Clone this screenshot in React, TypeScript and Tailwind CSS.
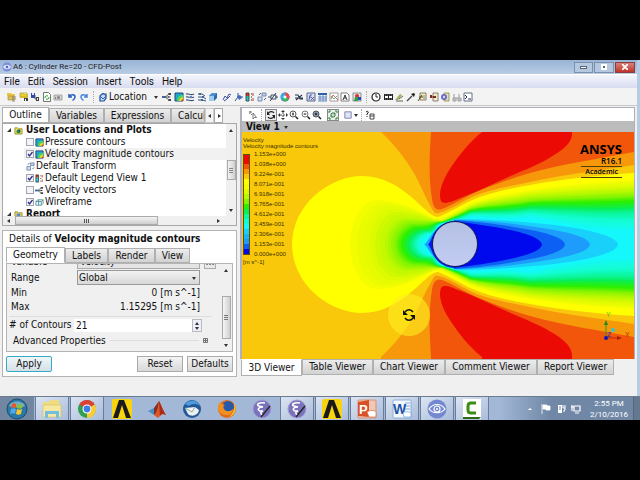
import { useState, type ReactNode } from "react";
import clsx from "clsx";

const UI_FONT = "font-['DejaVu_Sans_Condensed','DejaVu_Sans',sans-serif]";
const SHELL_FONT = "font-['Roboto','Noto_Sans',sans-serif]";

/* ---------- small toolbar icons, all on a 10x10 grid ---------- */

function Icon({ children, className = "size-[10px]" }: { children: ReactNode; className?: string }) {
  return (
    <svg viewBox="0 0 10 10" className={clsx("shrink-0", className)} fill="none" aria-hidden="true">
      {children}
    </svg>
  );
}

const icons: Record<string, ReactNode> = {
  loadResults: (
    <>
      <path d="M0 1h4l1 1h3v2H0z" fill="#e8c840" />
      <path d="M1 4h6v4H1z" fill="#dcc060" stroke="#a08830" strokeWidth=".6" />
      <path d="M5 5h4M5 7h4M5 9h3" stroke="#7a6c48" strokeWidth=".8" />
    </>
  ),
  loadState: (
    <>
      <path d="M1 1h4l1 1h3v4H1z" fill="#e8d030" />
      <path d="M1 1h7v4H1z" stroke="#b09a40" strokeWidth=".7" />
      <path d="M5 6h4v3H5z" fill="#444" />
      <path d="M6 7h1v2H6z" fill="#fff" />
    </>
  ),
  saveState: (
    <>
      <path d="M1 1h4v5H1z" fill="#2f49b8" />
      <path d="M2 1h2v2H2z" fill="#dfe6ff" />
      <path d="M6 5h3v4H6z" fill="#444" />
      <path d="M5 3v4h2" stroke="#555" />
      <path d="M7 6h1v2H7z" fill="#ddd" />
    </>
  ),
  refresh: (
    <>
      <path d="M1.500 .5h5l2 2v7h-7z" fill="#fff" stroke="#777" />
      <path d="M3 6a2 2 0 0 1 3-2M7 5a2 2 0 0 1-3 2" stroke="#20a030" />
    </>
  ),
  camera: (
    <>
      <path d="M1 3h8v5H1z" fill="#d0d0d0" stroke="#9a9a9a" strokeWidth=".8" />
      <circle cx="5.500" cy="5.500" r="1.500" fill="#888" />
      <path d="M2 5h1v2H2z" fill="#888" />
    </>
  ),
  undo: <path d="M2 2v3h3M2.500 4.500C4 2 8 2 8 5c0 1.500-1 2.500-2.500 3.500" stroke="#2a5fc0" strokeWidth="1.500" />,
  redo: <path d="M8 2v3H5M7.500 4.500C6 2 2 2 2 5c0 1.500 1 2.500 2.500 3.500" stroke="#4a86d8" strokeWidth="1.500" />,
  location: (
    <>
      <path d="M2 4l2-2h4v4L6 9H2z" fill="#c6dcf8" stroke="#1c4a9a" strokeWidth="1.200" />
      <path d="M5 1l3 3-3 3-3-3z" fill="none" stroke="#2c62b8" />
    </>
  ),
  vector: (
    <>
      <path d="M1 5h5M3 5l4-3M3 5l4 3" stroke="#444" strokeWidth=".8" />
      <path d="M6 1h3v2H7zM6 9h3V7H7z" fill="#444" />
      <path d="M0 4h3v2H0z" fill="#3b62b0" />
      <path d="M6 4l3 1-3 1z" fill="#444" />
    </>
  ),
  contour: (
    <>
      <path d="M1 1h8v8H1z" fill="#1fa8c8" stroke="#24437a" />
      <path d="M3 9c0-4 2-6 6-6v6z" fill="#40d860" />
      <path d="M5 9c0-2 2-4 4-4v4z" fill="#f0d020" />
      <path d="M7 9l2-2v2z" fill="#e03010" />
    </>
  ),
  streamline: (
    <>
      <path d="M1 2c3-1 4 2 8 0M1 5c3-1 4 2 8 0M1 8c3-1 4 2 8 0" stroke="#39547c" strokeWidth="1.200" />
      <path d="M5 4h2v2H5z" fill="#5f87c0" />
    </>
  ),
  particle: (
    <>
      <path d="M1 2h4l3 2M1 5h5l3 2M1 8h4l4 1" stroke="#31588c" />
      <path d="M2 1h2v2H2zM5 4h2v2H5zM4 7h2v2H4z" fill="#43688f" />
    </>
  ),
  volume: (
    <>
      <path d="M1 4l3-3h5v5L6 9H1z" fill="#2c69b4" />
      <path d="M1 4h5v5H1z" fill="#a4ccea" />
      <path d="M1 4l3-3h5L6 4z" fill="#4e93d0" />
    </>
  ),
  textItem: <path d="M1 8l2-4 2 2 2-4 2 1M2 9l3-2 3-3" stroke="#3c4ea0" />,
  coordFrame: (
    <>
      <path d="M1 9l3-4h5M4 5V1" stroke="#2e4f98" />
      <path d="M3 4l3-1 2 3-3 2z" fill="#436bba" />
    </>
  ),
  legend: (
    <>
      <path d="M1 1h3v3H1z" fill="#e03020" />
      <path d="M1 4h3v2H1z" fill="#20c0a0" />
      <path d="M1 6h3v3H1z" fill="#20c8d8" />
      <path d="M1 1h3v8H1z" stroke="#333" strokeWidth=".8" />
      <path d="M6 2h1M6 5h1M6 8h1" stroke="#333" />
      <path d="M8 1v3M8 6v3" stroke="#c04040" />
    </>
  ),
  transform: (
    <>
      <path d="M1 5h4v4H1z" fill="#d4dff2" stroke="#58759f" strokeWidth=".8" />
      <path d="M5 1h4v3H5z" fill="#c4d4f0" stroke="#58759f" strokeWidth=".8" />
      <path d="M2 3l2-2M7 8l2-2" stroke="#4c5d88" />
    </>
  ),
  clip: (
    <>
      <path d="M0 5h3M7 5h3M3 3h5v4H3z" stroke="#343f5c" strokeWidth=".9" />
      <path d="M2 9l6-8" stroke="#343f5c" />
    </>
  ),
  colorMap: (
    <>
      <circle cx="5" cy="5" r="4.500" fill="#7a50d0" />
      <path d="M5 5V.5A4.500 4.500 0 0 1 9 7z" fill="#f04848" />
      <path d="M5 5L9 7a4.500 4.500 0 0 1-7 1z" fill="#30c050" />
      <path d="M5 5L2 8A4.500 4.500 0 0 1 5 .5z" fill="#28b8e0" />
      <circle cx="5" cy="5" r="1.500" fill="#fff" />
    </>
  ),
  variable: <path d="M1 3h3l2 4h3M8 3L2 8M1 6h8" stroke="#273752" strokeWidth="1.100" />,
  expression: (
    <>
      <path d="M1 1h8v8H1z" fill="#d8dff4" stroke="#5a6488" />
      <path d="M3 8l1-5h2M3 5h2M5 5l3 3M8 5L5 8" stroke="#3a4690" strokeWidth=".8" />
    </>
  ),
  table: (
    <>
      <path d="M1 1h9v8H1z" fill="#fff" />
      <path d="M1 1h9v2H1z" fill="#2858a8" />
      <path d="M1 5h9M1 7h9M1 9h9M3 1v8M6 1v8M9 1v8" stroke="#4a72b4" strokeWidth=".8" />
    </>
  ),
  chart: (
    <>
      <path d="M1 1h8v8H1z" fill="#fff" stroke="#888" strokeWidth=".8" />
      <path d="M2 7l2-4 2 2 3 3" stroke="#d04040" strokeWidth=".8" />
      <path d="M2 4l3 3 3-3" stroke="#40a060" strokeWidth=".8" />
    </>
  ),
  comment: (
    <>
      <path d="M1 1h6l2 2v6H1z" fill="#fff" stroke="#666" strokeWidth=".8" />
      <path d="M3 8l2-5 2 5M4 6h2" stroke="#222" strokeWidth=".9" />
    </>
  ),
  figure: (
    <>
      <path d="M1 1h8v8H1z" fill="#e8e8e8" stroke="#777" strokeWidth=".8" />
      <circle cx="5" cy="4" r="2" fill="#e03030" />
      <path d="M3 5h3v4H2z" fill="#30a040" />
      <path d="M6 5h3v3H6z" fill="#2848c0" />
    </>
  ),
  clock: (
    <>
      <circle cx="5" cy="5" r="4" fill="#fff" stroke="#222" strokeWidth="1.200" />
      <path d="M5 2v3h2" stroke="#222" />
    </>
  ),
  film: (
    <>
      <path d="M1 2h9v6H1z" fill="#222" />
      <path d="M2 4h3v2H2zM6 4h3v2H6z" fill="#fff" />
      <path d="M2 3h7M2 7h7" stroke="#bbb" strokeWidth=".6" strokeDasharray="1 1" />
    </>
  ),
  quickEdit: (
    <>
      <path d="M1 8l5-6 2 1-4 5z" fill="#a0b060" />
      <path d="M2 9h7M5 7l4-3" stroke="#5c6650" />
    </>
  ),
  probe: (
    <>
      <path d="M1 9l5-5" stroke="#444" strokeWidth="1.200" />
      <path d="M5 2l3 3 1-3-1-1z" fill="#222" />
    </>
  ),
  report: (
    <>
      <path d="M3 1h6v7H3z" fill="#f0ecc8" stroke="#6c6640" strokeWidth=".8" />
      <path d="M1 9l4-6M2 5h4" stroke="#504c30" />
      <path d="M6 4h2M6 6h2" stroke="#888" />
    </>
  ),
  macro: (
    <>
      <path d="M4 1h5v8H4z" fill="#f0e8d0" stroke="#7c6650" strokeWidth=".8" />
      <path d="M1 3h2v3H1zM4 4h3v2H4z" fill="#7a3020" />
      <path d="M2 5h4" stroke="#7a3020" />
    </>
  ),
  turbo: (
    <>
      <path d="M4 1h5v8H4z" fill="#e8e0a8" stroke="#8a8450" strokeWidth=".8" />
      <circle cx="4" cy="5" r="3" fill="#6a6ad0" />
      <circle cx="4" cy="5" r="1.200" fill="#d8d8ff" />
    </>
  ),
  binoculars: (
    <>
      <path d="M2 2v4M7 2v4M1 6h3v3H1zM6 6h3v3H6zM4 6h2" stroke="#9a9a9a" />
      <path d="M1 6h3v3H1zM6 6h3v3H6z" fill="#b4b4b4" />
    </>
  ),
  console: (
    <>
      <path d="M1 1h8v8H1z" fill="#fff" stroke="#55607c" strokeWidth=".9" />
      <path d="M2 3l2 2-2 2M5 7h3" stroke="#222c50" />
    </>
  ),
  pick: (
    <>
      <path d="M5 3v6l1.500-1.500h2z" fill="#fff" stroke="#555" strokeWidth=".8" />
      <path d="M1 2h3M2 1v3M3 4l1 1" stroke="#777" />
    </>
  ),
  rotate: (
    <>
      <path d="M2 4c1-3 5-3 6-1M8 6c-1 3-5 3-6 1" stroke="#222" strokeWidth="1.200" />
      <path d="M1 1v4h3zM9 9V5H6z" fill="#222" />
    </>
  ),
  pan: (
    <>
      <path d="M5 2v6M2 5h6" stroke="#444" strokeDasharray="2 1" />
      <path d="M5 0l2 2H3zM5 10l2-2H3zM0 5l2-2v4zM10 5L8 3v4z" fill="#333" />
    </>
  ),
  zoom: (
    <>
      <circle cx="4" cy="4" r="3" fill="#fff" stroke="#555" />
      <path d="M6.500 6.500L9 9" stroke="#222" strokeWidth="1.500" />
      <path d="M4 2.500v3M3 4h2" stroke="#333" />
    </>
  ),
  zoomBox: (
    <>
      <circle cx="4" cy="4" r="3" fill="#fff" stroke="#777" />
      <path d="M6.500 6.500L9 9" stroke="#222" strokeWidth="1.500" />
      <path d="M2.500 4h3M4 3v2" stroke="#444" strokeWidth=".8" />
    </>
  ),
  zoomFit: (
    <>
      <circle cx="4" cy="4" r="3" fill="#8694a8" stroke="#555" />
      <path d="M6.500 6.500L9 9" stroke="#222" strokeWidth="1.500" />
      <path d="M3 3h2v2H3z" fill="#2c3a50" />
    </>
  ),
  highlight: (
    <>
      <path d="M1 3V1h2M7 1h2v2M9 7v2H7M3 9H1V7" stroke="#1f8a2c" />
      <path d="M3 4l1-1h3v3L6 7H3z" fill="#b8e8b8" stroke="#1d5a28" strokeWidth=".8" />
    </>
  ),
  viewport: <path d="M1 1h8v8H1z" fill="#e0e4f8" stroke="#6b74a0" />,
  help: (
    <>
      <path d="M1 2c1-1 3-1 2 1L2 4v1M2 6v1" stroke="#222" />
      <path d="M5 4h4v5H5zM5 6h4" stroke="#333" strokeWidth=".9" />
    </>
  ),
  wireframe: <path d="M1 4l2-2h6v4L7 8H1zM1 4h6v4M7 4l2-2M4 2v6" stroke="#3d8490" strokeWidth=".9" />,
  folder: (
    <>
      <path d="M1 2h3l1 1h4v6H1z" fill="#e4d850" stroke="#8c8430" strokeWidth=".8" />
      <circle cx="5" cy="6" r="2.200" fill="#2c8a48" />
      <circle cx="6" cy="5" r="1" fill="#203c90" />
    </>
  ),
  reportFolder: (
    <>
      <path d="M1 2h3l1 1h4v6H1z" fill="#e4d850" stroke="#8c8430" strokeWidth=".8" />
      <path d="M3 4h4v4H3z" fill="#5a86d8" />
    </>
  ),
};

function ToolGroup({ names, className }: { names: string[]; className: string }) {
  return (
    <div className={clsx("flex shrink-0 items-center justify-between", className)}>
      {names.map((name) => (
        <button key={name} type="button" aria-label={name}>
          <Icon>{icons[name]}</Icon>
        </button>
      ))}
    </div>
  );
}

function Grip() {
  return <span className="h-3 w-px shrink-0 border-l border-dotted border-[#aaa]" />;
}

/* ---------- contour plot ---------- */

interface Level {
  rgb: number[];
  shape: number[];
}

// shape: start on the axis, crest of the lobe (x, y), neck over the cylinder
// (x, y), then three heights along the wake. Only the upper half is listed.
const levels: Level[] = [
  { rgb: [255, 255, 0], shape: [50, 120, 44, 196, 85, 69, 53, 41] },
  { rgb: [244, 253, 0], shape: [108, 134, 68, 198, 87, 72, 58, 48] },
  { rgb: [220, 250, 0], shape: [128, 150, 77, 199, 88, 74, 61, 53] },
  { rgb: [184, 248, 0], shape: [143, 162, 86, 200, 89, 75, 64, 58] },
  { rgb: [132, 244, 0], shape: [152, 170, 91, 201, 89, 77, 68, 63] },
  { rgb: [44, 240, 0], shape: [159, 177, 95, 201, 90, 78, 71, 68] },
  { rgb: [8, 238, 88], shape: [166, 183, 98, 202, 90, 80, 75, 75] },
  { rgb: [12, 246, 160], shape: [171, 186, 100, 202, 91, 81, 78, 80] },
  { rgb: [20, 252, 212], shape: [175, 189, 101, 203, 91, 83, 81, 87] },
  { rgb: [20, 248, 252], shape: [180, 191, 102, 204, 91, 85, 85, 98] },
];

const STEPS = 3;

const mix = (a: number[], b: number[], t: number) => a.map((v, i) => v + (b[i] - v) * t);

// The first band stays flat, the ones after it are shaded into each other
const bands = levels.flatMap((level, i) => {
  const next = levels[i + 1];
  if (i === 0 || !next) return [level];
  return Array.from({ length: STEPS }, (_, s) => ({
    rgb: mix(level.rgb, next.rgb, s / STEPS),
    shape: mix(level.shape, next.shape, s / STEPS),
  }));
});

function bandPath([x0, cx, cy, nx, ny, a, b, c]: number[]) {
  const half = (cx - x0) * 0.45;
  return [
    `M${x0} 113`,
    `C${x0} ${cy + (113 - cy) * 0.4} ${cx - half} ${cy} ${cx} ${cy}`,
    `C${cx + (nx - cx) * 0.55} ${cy} ${nx - 12} ${ny + 1} ${nx} ${ny}`,
    `C${nx + 8} ${ny - 3} 218 ${a + 5} 228 ${a}`,
    `C245 ${a - (a - b) * 0.5} 265 ${b + 4} 288 ${b}`,
    `C320 ${b - (b - c) * 0.5} 360 ${c + 2} 392 ${c}`,
    "V113Z",
  ].join(" ");
}

function ContourHalf() {
  return (
    <>
      <path d="M139 -3V0C155 15 165 29 173 43C181 58 186 72 193 81C199 83 215 73 228 66C245 58 268 54 288 50C320 43 360 38 392 33V-3Z" fill="#f6980a" />
      <path d="M189 -3V0C187 30 187 50 190 67C191 76 195 79 200 77C210 73 216 69 228 63C245 55 268 47 288 41C320 32 360 26 392 20V-3Z" fill="#f2560a" />
      <path d="M240 -3V0C227 10 214 27 206 40C200 50 196 62 199 69C202 73 209 70 216 67C235 60 255 50 271 43C285 37 295 33 304 28C318 20 331 12 330 0V-3Z" fill="#ec0a04" />
      {bands.map((band, i) => (
        <path key={i} d={bandPath(band.shape)} fill={`rgb(${band.rgb.map(Math.round).join(",")})`} />
      ))}
      {/* slow layer hugging the front of the cylinder */}
      <path d="M182 113C187 109 189 100 200 93C208 88 214 88 222 89V113Z" fill="#18a0fc" />
      <path d="M186 113C190 108 190 101 198 94C207 88 214 89 222 90V113Z" fill="#0818e8" />
      {/* wake */}
      <path d="M212 87C240 87 276 89 312 93C345 97 376 104 376 113H212Z" fill="#18d0fa" />
      <path d="M212 88C240 88 270 91 300 96C325 100 348 105 348 113H212Z" fill="#1e9cfc" />
      <path d="M212 88C240 90 262 93 283 97C306 101 323 106 323 113H212Z" fill="#0c60f4" />
      <path d="M212 89C232 92 250 94 268 98C287 102 300 107 300 113H212Z" fill="#0008ee" />
    </>
  );
}

function ContourPlot() {
  return (
    <svg viewBox="0 0 392 227" preserveAspectRatio="xMidYMid slice" className="block min-h-0 w-full flex-1" role="img" aria-label="Velocity magnitude contours">
      <defs>
        <linearGradient id="cylinder" x1="0" y1="0" x2="0" y2="1">
          <stop offset="0" stopColor="#b4c0e2" />
          <stop offset="1" stopColor="#c2ccf4" />
        </linearGradient>
      </defs>
      <rect width="392" height="227" fill="#f9c80a" />
      <ContourHalf />
      <g transform="translate(0 225) scale(1 -1)">
        <ContourHalf />
      </g>
      <circle cx="213" cy="112" r="22.500" fill="url(#cylinder)" stroke="#101850" strokeWidth="1" />

      {/* cursor spotlight */}
      <circle cx="167" cy="183" r="21" fill="#ffee20" fillOpacity=".62" />
      <path d="M163 180c2-3 6-3 8 0M171 186c-2 3-6 3-8 0" fill="none" stroke="#111" strokeWidth="1.400" />
      <path d="M161 178v5h5zM173 188v-5h-5z" fill="#111" />

      {/* axis triad */}
      <path d="M364 206V192" stroke="#20a020" />
      <path d="M364 188l2 5h-4z" fill="#188a20" />
      <path d="M364 206h13" stroke="#c02810" />
      <path d="M380 206l-5-2v4z" fill="#b01810" />
      <circle cx="371" cy="198" r="2" fill="#30c8d0" />
      <circle cx="364" cy="206" r="2" fill="#1018b0" />
      <g fontFamily="Liberation Sans, sans-serif" fontSize="7">
        <text x="364" y="185" fill="#68b818">Y</text>
        <text x="383" y="205" fill="#c03018">X</text>
        <text x="365" y="205" fill="#1828c0">Z</text>
      </g>
    </svg>
  );
}

const legendLabels = [
  "1.153e+000",
  "1.038e+000",
  "9.224e-001",
  "8.071e-001",
  "6.918e-001",
  "5.765e-001",
  "4.612e-001",
  "3.459e-001",
  "2.306e-001",
  "1.153e-001",
  "0.000e+000",
];

const legendColors = [
  "#ec0a04", "#ec0a04", "#f2560a", "#f6980a", "#f9c80a", "#ffff00", "#f4fd00", "#dcfa00", "#b8f800", "#84f400",
  "#2cf000", "#08ee58", "#0cf6a0", "#14fcd4", "#14f8fc", "#18d0fa", "#18b4fa", "#1e9cfc", "#0c60f4", "#0008ee",
];

function Legend() {
  return (
    <div className="absolute top-[5px] left-px font-['Liberation_Sans',sans-serif] text-[6px] leading-[6px] text-[#3a3000]">
      <div>Velocity</div>
      <div>Velocity magnitude contours</div>
      <div className="flex items-center gap-1">
        <div className="flex h-[101px] w-[7px] flex-col border border-[#605010]">
          {legendColors.map((color, i) => (
            <span key={i} className="flex-1" style={{ backgroundColor: color }} />
          ))}
        </div>
        <div className="flex flex-col leading-[10px]">
          {legendLabels.map((label) => (
            <span key={label}>{label}</span>
          ))}
        </div>
      </div>
      <div>[m s^-1]</div>
    </div>
  );
}

/* ---------- outline panel ---------- */

interface TreeItem {
  label: string;
  icon: string;
  checked?: boolean;
  selected?: boolean;
}

const treeItems: TreeItem[] = [
  { label: "Pressure contours", icon: "contour", checked: false },
  { label: "Velocity magnitude contours", icon: "contour", checked: true, selected: true },
  { label: "Default Transform", icon: "transform" },
  { label: "Default Legend View 1", icon: "legend", checked: true },
  { label: "Velocity vectors", icon: "vector", checked: false },
  { label: "Wireframe", icon: "wireframe", checked: true },
];

function TreeCheckbox({ defaultChecked }: { defaultChecked: boolean }) {
  return (
    <span className="grid size-2 shrink-0">
      <input
        type="checkbox"
        defaultChecked={defaultChecked}
        className="peer col-start-1 row-start-1 size-2 appearance-none border border-[#a4a4ae] bg-[#f4f4f6]"
      />
      <svg viewBox="0 0 8 8" className="pointer-events-none invisible col-start-1 row-start-1 size-2 peer-checked:visible" fill="none">
        <path d="M2 4l1.500 2L6.500 2" stroke="#30308c" strokeWidth="1.300" />
      </svg>
    </span>
  );
}

function Arrow({ dir }: { dir: "up" | "down" | "left" | "right" }) {
  const d = { up: "M0 4l2-3 2 3z", down: "M0 1l2 3 2-3z", left: "M3 0L0 2l3 2z", right: "M1 0l3 2-3 2z" }[dir];
  return (
    <svg viewBox="0 0 4 4" className="size-1 shrink-0">
      <path d={d} fill="#333" />
    </svg>
  );
}

function GroupRow({ icon, label }: { icon: string; label: string }) {
  return (
    <div className="flex h-3 shrink-0 items-center gap-[3px] pl-1 font-bold">
      <svg viewBox="0 0 4 4" className="size-1 shrink-0">
        <path d="M4 0v4H0z" fill="#333" />
      </svg>
      <Icon className="size-[9px]">{icons[icon]}</Icon>
      <span>{label}</span>
    </div>
  );
}

function OutlineTree() {
  return (
    <div className="border border-[#a8a8a8] bg-white">
      <div className="flex h-[92px]">
        <div className="flex min-w-0 flex-1 flex-col overflow-hidden whitespace-nowrap">
          <GroupRow icon="folder" label="User Locations and Plots" />
          {treeItems.map((item) => (
            <label
              key={item.label}
              className={clsx(
                "ml-[21px] flex h-3 shrink-0 items-center gap-px pl-0.5",
                item.selected && "bg-[#f1f1f1]"
              )}
            >
              {item.checked !== undefined && <TreeCheckbox defaultChecked={item.checked} />}
              <Icon className="size-[9px]">{icons[item.icon]}</Icon>
              <span>{item.label}</span>
            </label>
          ))}
          <GroupRow icon="reportFolder" label="Report" />
        </div>
        <div className="flex w-[10px] flex-col items-center justify-between bg-[#f0f0f0] py-1">
          <Arrow dir="up" />
          <span className="flex h-5 w-[9px] flex-col items-center justify-center gap-px border border-[#aaa] bg-gradient-to-r from-[#f4f4f4] to-[#cfcfcf]">
            <i className="h-px w-1 bg-[#888]" />
            <i className="h-px w-1 bg-[#888]" />
            <i className="h-px w-1 bg-[#888]" />
          </span>
          <Arrow dir="down" />
        </div>
      </div>
      <div className="flex h-[9px] items-center bg-[#f0f0f0] pr-4 pl-1">
        <Arrow dir="left" />
        <span className="ml-1 flex h-[9px] w-[143px] items-center justify-center gap-px border border-[#aaa] bg-gradient-to-b from-[#f4f4f4] to-[#cfcfcf]">
          <i className="h-1 w-px bg-[#555]" />
          <i className="h-1 w-px bg-[#555]" />
          <i className="h-1 w-px bg-[#555]" />
        </span>
        <span className="ml-auto flex">
          <Arrow dir="right" />
        </span>
      </div>
    </div>
  );
}

function Tab({ active, onClick, className, children }: { active: boolean; onClick?: () => void; className?: string; children: ReactNode }) {
  return (
    <button
      type="button"
      onClick={onClick}
      className={clsx(
        "shrink-0 overflow-hidden border border-[#b0b0b0] text-center whitespace-nowrap",
        active ? "bg-white" : "bg-gradient-to-b from-[#ececec] to-[#d2d2d2]",
        className
      )}
    >
      {children}
    </button>
  );
}

function DetailsPanel() {
  const [tab, setTab] = useState("Geometry");
  const tabs = [
    { name: "Geometry", width: "w-[59px]" },
    { name: "Labels", width: "w-[43px]" },
    { name: "Render", width: "w-[47px]" },
    { name: "View", width: "w-[35px]" },
  ];

  return (
    <div className="mt-1 border border-[#b4b4b4] bg-white px-[3px] pb-1">
      <h2 className="h-4 pt-px pl-[3px] leading-[14px]">
        Details of <b>Velocity magnitude contours</b>
      </h2>
      <div className="flex h-4 items-end">
        {tabs.map((t) => (
          <Tab
            key={t.name}
            active={t.name === tab}
            onClick={() => setTab(t.name)}
            className={clsx(t.width, t.name === tab ? "h-4 border-b-white" : "h-[15px]")}
          >
            {t.name}
          </Tab>
        ))}
      </div>

      <div className="flex h-[89px] border border-[#b4b4b4] bg-[#f0f0f0]">
        {/* scrolled to the bottom, so the first row is cut */}
        <div className="flex min-w-0 flex-1 flex-col justify-end overflow-hidden pl-0.5">
          <div className="flex h-[15px] shrink-0 items-center">
            <label htmlFor="variable" className="w-[68px] pl-0.5">Variable</label>
            <select id="variable" className="h-[14px] w-[123px] appearance-none border border-[#aaa] bg-[#e4e4e4] px-0.5">
              <option>Velocity</option>
            </select>
            <button type="button" className="ml-1 h-[14px] w-3 border border-[#aaa] bg-[#e8e8e8] leading-[10px]">…</button>
          </div>
          <div className="flex h-[17px] shrink-0 items-center">
            <label htmlFor="range" className="w-[68px] pl-0.5">Range</label>
            <span className="grid w-[123px] items-center">
              <select id="range" className="col-start-1 row-start-1 h-[15px] appearance-none border border-[#999] bg-gradient-to-b from-[#f2f2f2] to-[#d8d8d8] px-px">
                <option>Global</option>
              </select>
              <span className="pointer-events-none col-start-1 row-start-1 mr-1 justify-self-end">
                <Arrow dir="down" />
              </span>
            </span>
          </div>
          <div className="flex h-[14px] w-[191px] shrink-0 items-center justify-between pl-0.5">
            <span>Min</span>
            <span>0 [m s^-1]</span>
          </div>
          <div className="flex h-[14px] w-[191px] shrink-0 items-center justify-between pl-0.5">
            <span>Max</span>
            <span>1.15295 [m s^-1]</span>
          </div>
          <div className="mt-0.5 mr-2 flex h-[17px] shrink-0 items-center border-t border-[#ddd]">
            <label htmlFor="contours" className="w-[65px] whitespace-nowrap">
              # of Contours
            </label>
            <input id="contours" defaultValue="21" className="h-[13px] w-[118px] bg-white px-0.5 outline-none" />
            <span className="flex h-[13px] w-[10px] flex-col items-center justify-between border border-[#bbb] bg-[#eef] py-px">
              <Arrow dir="up" />
              <Arrow dir="down" />
            </span>
          </div>
          <div className="mr-2 mb-[3px] flex h-[15px] shrink-0 items-center gap-1 pl-1">
            <span className="whitespace-nowrap">Advanced Properties</span>
            <span className="h-px flex-1 bg-[#ddd]" />
            <button type="button" aria-label="Expand" className="mr-1 flex">
              <svg viewBox="0 0 5 5" className="size-[5px]">
                <path d="M.5.5h4v4h-4zM2.500 1v3M1 2.500h3" fill="none" stroke="#555" strokeWidth=".8" />
              </svg>
            </button>
          </div>
        </div>
        <div className="flex w-3 flex-col items-center py-1">
          <Arrow dir="up" />
          <span className="mt-auto mb-1 flex h-[43px] w-[9px] flex-col items-center justify-center gap-px border border-[#aaa] bg-gradient-to-r from-[#f6f6f6] to-[#cfcfcf]">
            <i className="h-px w-1 bg-[#777]" />
            <i className="h-px w-1 bg-[#777]" />
            <i className="h-px w-1 bg-[#777]" />
          </span>
          <Arrow dir="down" />
        </div>
      </div>

      <div className="mt-1 flex gap-1">
        <button type="button" className="mr-auto h-4 w-[46px] rounded-[2px] border border-[#35a8c8] bg-gradient-to-b from-[#f0f6f8] to-[#d4e0e6] leading-[12px]">
          Apply
        </button>
        <button type="button" className="h-4 w-[46px] border border-[#aaa] bg-gradient-to-b from-[#f4f4f4] to-[#d8d8d8] leading-[12px]">Reset</button>
        <button type="button" className="h-4 w-[46px] border border-[#aaa] bg-gradient-to-b from-[#f4f4f4] to-[#d8d8d8] leading-[12px]">Defaults</button>
      </div>
    </div>
  );
}

/* ---------- taskbar ---------- */

function AnsysLogo() {
  return (
    <>
      <rect width="20" height="20" rx="2" fill="#f8d410" />
      <path d="M1 19L7 1h5l7 18h-5L10 6 6 19z" fill="#1a1a1a" />
    </>
  );
}

function EmacsLogo() {
  return (
    <>
      <circle cx="10" cy="10" r="9" fill="#7a72bc" stroke="#a49ed4" />
      <path d="M13 4C6 3 4 6 7 7l4 1c-5 0-6 3-3 4l3 0c-3 1-3 3 0 4" fill="none" stroke="#fff" strokeWidth="1.600" />
      <path d="M18 7L9 18" stroke="#222" strokeWidth="1.300" />
    </>
  );
}

const taskbarApps: { name: string; open: boolean; logo: ReactNode }[] = [
  {
    name: "Explorer",
    open: true,
    logo: (
      <>
        <path d="M1 3h6l1-2h9v4h2v13H1z" fill="#f0dc80" />
        <path d="M1 6h18v12H1z" fill="#f6e8a0" stroke="#d8bc58" strokeWidth=".6" />
        <path d="M3 12h14v7h-3v-4H6v4H3z" fill="#74bce0" />
      </>
    ),
  },
  {
    name: "Chrome",
    open: true,
    logo: (
      <>
        <circle cx="10" cy="10" r="9" fill="#30a050" />
        <path d="M10 10L2.200 5.500A9 9 0 0 1 17.800 5.500z" fill="#dc4234" />
        <path d="M10 10l7.800-4.500A9 9 0 0 1 10 19z" fill="#f8cc38" />
        <circle cx="10" cy="10" r="4.500" fill="#fff" />
        <circle cx="10" cy="10" r="3.400" fill="#3f7ee4" />
      </>
    ),
  },
  { name: "Workbench", open: false, logo: <AnsysLogo /> },
  {
    name: "MATLAB",
    open: false,
    logo: (
      <>
        <path d="M1 12l6-3 3 4-3 3z" fill="#4a90c8" />
        <path d="M7 9l5-7-1 11-4 3z" fill="#803028" />
        <path d="M12 2c2 3 4 10 7 14-3-1-4-1-5 0l-3 3-4-3c3-2 4-9 5-14z" fill="#dc5828" />
        <path d="M12 2c2 3 4 10 7 14-3-2-5-1-6 1z" fill="#a82c18" />
      </>
    ),
  },
  {
    name: "Thunderbird",
    open: false,
    logo: (
      <>
        <circle cx="10" cy="10" r="9" fill="#225898" />
        <path d="M3 5c4-5 13-4 15 2-4-3-9-2-11 0z" fill="#4c9cdc" />
        <path d="M3 9l10-1 4 3c-1 6-8 7-11 4z" fill="#f0f0f0" />
        <path d="M3 9l7 4 3-5" fill="none" stroke="#8aa" />
      </>
    ),
  },
  {
    name: "Firefox",
    open: false,
    logo: (
      <>
        <circle cx="10" cy="10" r="9" fill="#e46c18" />
        <circle cx="11" cy="8" r="6" fill="#2858a8" />
        <path d="M1 9c0-3 1-5 2-6 1 2 3 2 5 3-2 1-2 2-1 4 2 3 6 3 9 0 0 4-3 6-6 6-5 0-9-3-9-7z" fill="#f09020" />
        <path d="M17 4c3 4 2 12-5 14 4-3 6-7 5-14z" fill="#f8c830" />
      </>
    ),
  },
  { name: "Emacs", open: false, logo: <EmacsLogo /> },
  { name: "Emacs window", open: true, logo: <EmacsLogo /> },
  { name: "ANSYS", open: true, logo: <AnsysLogo /> },
  {
    name: "PowerPoint",
    open: true,
    logo: (
      <>
        <rect x="1" y="1" width="18" height="18" rx="1" fill="#f0c8b4" stroke="#d89070" />
        <path d="M1 3l11-2v17L1 17z" fill="#d85028" />
        <text x="2" y="15" fontFamily="Liberation Sans, sans-serif" fontWeight="bold" fontSize="13" fill="#fff">P</text>
        <path d="M10 13c2-2 8-2 9 0v5h-7z" fill="#fff" stroke="#d86840" strokeWidth=".7" />
      </>
    ),
  },
  {
    name: "Word",
    open: true,
    logo: (
      <>
        <rect x="1" y="1" width="18" height="18" rx="1" fill="#f4f8fc" stroke="#8cb0d8" />
        <path d="M13 4h5M13 7h5M13 10h5" stroke="#80a8d8" />
        <text x="1" y="15" fontFamily="Liberation Sans, sans-serif" fontWeight="bold" fontSize="14" fill="#1c54a8">W</text>
        <path d="M11 14c2-2 7-1 8 0v4h-7z" fill="#fff" stroke="#70a0d8" strokeWidth=".7" />
      </>
    ),
  },
  {
    name: "CFD-Post",
    open: true,
    logo: (
      <>
        <circle cx="10" cy="10" r="9.500" fill="#7488d0" />
        <path d="M2 10c4-6 12-6 16 0-4 5-12 5-16 0z" fill="none" stroke="#fff" strokeWidth="1.200" />
        <circle cx="10" cy="10" r="3" fill="none" stroke="#fff" strokeWidth="1.200" />
        <circle cx="10" cy="10" r="1" fill="#fff" />
      </>
    ),
  },
  {
    name: "Camtasia",
    open: true,
    logo: (
      <>
        <rect x="1" y="0" width="18" height="20" fill="#fff" />
        <path d="M14 4H9C7 4 6 5 6 7v4c0 2 1 3 3 3h5" fill="none" stroke="#3c8c18" strokeWidth="3" />
        <path d="M1 18h18l-2 2H1z" fill="#2c6c14" />
      </>
    ),
  },
];

function Taskbar() {
  return (
    <footer className="flex h-6 shrink-0 items-stretch gap-px border-t border-[#6c7c90] bg-gradient-to-r from-[#a2b8d6] from-78% to-[#7088a6] to-86%">
      <button type="button" aria-label="Start" className="flex w-[34px] items-center justify-center bg-[#7186a0]">
        <svg viewBox="0 0 22 22" className="size-[22px]">
          <circle cx="11" cy="11" r="10" fill="#2878a8" stroke="#1c4c74" />
          <path d="M3 8c2-6 14-6 16 0-4 2-12 2-16 0z" fill="#a8cce0" opacity=".6" />
          <path d="M6 6c2-1 3-1 4 0v4c-2-1-3-1-5 0z" fill="#e85820" />
          <path d="M11 6c2 1 3 1 6 0l-1 4c-2 1-3 1-5 0z" fill="#88c038" />
          <path d="M5 11c2-1 3-1 5 0l-1 5c-1-1-3-1-5 0z" fill="#50a8e8" />
          <path d="M11 11c2 1 3 1 5 0l-1 5c-2 1-3 1-5 0z" fill="#f8c828" />
        </svg>
      </button>
      {taskbarApps.map((app) => (
        <button
          key={app.name}
          type="button"
          aria-label={app.name}
          className={clsx(
            "flex w-[34px] shrink-0 items-center justify-center",
            app.open && "border-x border-[#6a7c98] bg-gradient-to-br from-[#dbe4f2] to-[#a9bcda]"
          )}
        >
          <svg viewBox="0 0 20 20" className="size-5">
            {app.logo}
          </svg>
        </button>
      ))}
      <div className={clsx("ml-auto flex items-center gap-[5px] text-[8px] leading-[11px] text-white", SHELL_FONT)}>
        <svg viewBox="0 0 4 4" className="mr-1 size-1">
          <path d="M0 3l2-2 2 2z" fill="#fff" />
        </svg>
        <svg viewBox="0 0 10 10" className="size-[10px]">
          <path d="M1 0v10M2 1h4v1h3v4H5V5H2z" fill="#fff" stroke="#fff" strokeWidth=".8" />
        </svg>
        <svg viewBox="0 0 10 10" className="size-[10px]" fill="none">
          <path d="M2 1h4v8H2z" fill="#fff" />
          <path d="M7 1v3M9 1v3M7 4h2v2H8v2" stroke="#fff" />
          <path d="M3 3h2M3 5h2" stroke="#7088a6" />
        </svg>
        <svg viewBox="0 0 10 10" className="size-[10px]" fill="none">
          <path d="M3 2h6v5H3zM1 1v6M0 3h3M4 9h4" stroke="#fff" strokeWidth="1.200" />
        </svg>
        <div className="ml-1 text-center whitespace-nowrap">
          <div>2:55 PM</div>
          <div>2/10/2016</div>
        </div>
        <button type="button" aria-label="Show desktop" className="h-full w-[7px] border-l border-[#55667e] bg-[#64788f]" />
      </div>
    </footer>
  );
}

/* ---------- window ---------- */

const menus = ["File", "Edit", "Session", "Insert", "Tools", "Help"];

const viewerTabs = [
  { name: "3D Viewer", width: "w-[61px]" },
  { name: "Table Viewer", width: "w-[71px]" },
  { name: "Chart Viewer", width: "w-[72px]" },
  { name: "Comment Viewer", width: "w-[92px]" },
  { name: "Report Viewer", width: "w-[77px]" },
];

export default function App() {
  const [viewer, setViewer] = useState("3D Viewer");
  const [outlineTab, setOutlineTab] = useState("Outline");

  return (
    <div className={clsx("flex h-screen flex-col bg-black py-[60px] text-[10px] leading-3 text-[#111]", UI_FONT)}>
      <div className="flex min-h-0 flex-1 bg-[#b4cce4] pr-[3px]">
        <div className="flex min-w-0 flex-1 flex-col bg-[#f0f0f0]">
          {/* title bar */}
          <header className={clsx("flex h-[14px] shrink-0 items-center bg-gradient-to-b from-[#98b4d6] to-[#b8cce4] px-0.5 text-[8px] text-[#222]", SHELL_FONT)}>
            <svg viewBox="0 0 10 10" className="mr-px size-[10px]">
              <circle cx="5" cy="5" r="4.500" fill="#7c8cd8" />
              <path d="M1 5c2-3 6-3 8 0-2 3-6 3-8 0z" fill="#dfe4fc" />
              <circle cx="5" cy="5" r="1.300" fill="#5868b8" />
            </svg>
            <span>A6 : Cylinder Re=20 - CFD-Post</span>
            <div className="ml-auto flex gap-px">
              <button type="button" aria-label="Minimize" className="flex h-[11px] w-[19px] items-center justify-center border border-[#7c90ac] bg-[#b4c8e0]">
                <span className="h-[3px] w-[7px] border border-[#55657c] bg-white" />
              </button>
              <button type="button" aria-label="Maximize" className="flex h-[11px] w-[20px] items-center justify-center border border-[#7c90ac] bg-[#b4c8e0]">
                <span className="size-[6px] border-2 border-white bg-[#55657c]" />
              </button>
              <button type="button" aria-label="Close" className="flex h-[11px] w-[20px] items-center justify-center border border-[#8c3c3c] bg-gradient-to-b from-[#d88078] to-[#c03028]">
                <svg viewBox="0 0 6 6" className="size-[6px]">
                  <path d="M0 0l6 6M6 0L0 6" stroke="#fff" strokeWidth="1.800" />
                </svg>
              </button>
            </div>
          </header>

          <nav className={clsx("flex h-[14px] shrink-0 items-center gap-2 border-t border-white bg-gradient-to-b from-[#f4f5fc] to-[#d8dcf0] pl-1", SHELL_FONT)}>
            {menus.map((m) => (
              <button key={m} type="button">
                {m}
              </button>
            ))}
          </nav>

          <div className="flex h-[18px] shrink-0 items-center gap-1 border-b border-[#c8c8c8] bg-[#f3f3f3] pl-[7px]">
            <ToolGroup names={["loadResults", "loadState", "saveState", "refresh", "camera"]} className="w-[56px]" />
            <ToolGroup names={["undo", "redo"]} className="w-[22px]" />
            <Grip />
            <button type="button" className="flex w-[60px] shrink-0 items-center gap-px">
              <Icon>{icons.location}</Icon>
              <span>Location</span>
              <span className="ml-auto"><Arrow dir="down" /></span>
            </button>
            <ToolGroup names={["vector", "contour", "streamline", "particle", "volume"]} className="w-[56px]" />
            <ToolGroup names={["textItem", "coordFrame", "legend", "transform", "clip", "colorMap"]} className="w-[68px]" />
            <ToolGroup names={["variable", "expression", "table", "chart", "comment", "figure"]} className="w-[68px]" />
            <Grip />
            <ToolGroup
              names={["clock", "film", "quickEdit", "probe", "report", "macro", "turbo", "binoculars", "console"]}
              className="w-[102px]"
            />
          </div>

          <main className="flex min-h-0 flex-1 pt-px pb-5">
            {/* left column */}
            <section className="flex w-[240px] shrink-0 flex-col pr-[3px] pl-0.5">
              <div className="flex h-4 shrink-0 items-end">
                <Tab active={outlineTab === "Outline"} onClick={() => setOutlineTab("Outline")} className="h-4 w-[47px]">Outline</Tab>
                <Tab active={outlineTab === "Variables"} onClick={() => setOutlineTab("Variables")} className="h-[15px] w-[55px]">Variables</Tab>
                <Tab active={outlineTab === "Expressions"} onClick={() => setOutlineTab("Expressions")} className="h-[15px] w-[67px]">Expressions</Tab>
                <Tab active={outlineTab === "Calculators"} onClick={() => setOutlineTab("Calculators")} className="h-[15px] w-[34px] pl-1.5 text-left">Calculators</Tab>
                <button type="button" aria-label="Scroll left" className="flex h-[15px] w-[9px] items-center justify-center border border-[#ccc] bg-[#f4f4f4]">
                  <Arrow dir="left" />
                </button>
                <button type="button" aria-label="Scroll right" className="flex h-[15px] w-[9px] items-center justify-center border border-[#aaa] bg-white">
                  <Arrow dir="right" />
                </button>
              </div>
              <OutlineTree />
              <DetailsPanel />
            </section>

            {/* viewer */}
            <section className="flex min-w-0 flex-1 flex-col pr-0.5">
              <div className="flex min-h-0 flex-1 flex-col border-t border-r border-l-2 border-[#b0b0bc] bg-white">
                <div className="flex h-[13px] shrink-0 items-center gap-px pl-[6px]">
                  <Icon>{icons.pick}</Icon>
                  <span className="mx-0.5 flex"><Grip /></span>
                  <button type="button" aria-label="Rotate" className="border border-[#888] bg-[#eee]"><Icon>{icons.rotate}</Icon></button>
                  <ToolGroup names={["pan", "zoom", "zoomBox", "zoomFit"]} className="w-[44px]" />
                  <button type="button" aria-label="Highlight" className="ml-1 border border-[#888] bg-[#eee]"><Icon>{icons.highlight}</Icon></button>
                  <button type="button" aria-label="Viewport layout" className="ml-1 flex items-center gap-0.5">
                    <Icon className="size-2">{icons.viewport}</Icon>
                    <Arrow dir="down" />
                  </button>
                  <span className="mx-0.5 flex"><Grip /></span>
                  <Icon>{icons.help}</Icon>
                </div>
                <div className="flex h-[11px] shrink-0 items-center gap-1 bg-[#bcbcbc] pl-1 font-bold">
                  <span>View 1</span>
                  <Arrow dir="down" />
                </div>
                <div className="relative flex min-h-0 flex-1 flex-col">
                  <ContourPlot />
                  <Legend />
                  <div className="absolute top-2.5 right-3 flex flex-col items-end font-['Open_Sans','Noto_Sans',sans-serif] text-black">
                    <span className="text-[13px] leading-[14px] font-bold">ANSYS</span>
                    <span className="text-[8px] leading-[10px] font-semibold">R16.1</span>
                    <span className="border-y border-[#50400a] px-1 text-[7px] leading-[10px] font-semibold">Academic</span>
                  </div>
                </div>
              </div>
              <div className="flex h-[17px] shrink-0 items-start pl-px">
                {viewerTabs.map((t) => (
                  <Tab
                    key={t.name}
                    active={t.name === viewer}
                    onClick={() => setViewer(t.name)}
                    className={clsx(t.width, t.name === viewer ? "h-[17px] border-t-white" : "h-4")}
                  >
                    {t.name}
                  </Tab>
                ))}
              </div>
            </section>
          </main>
        </div>
      </div>
      <Taskbar />
    </div>
  );
}
